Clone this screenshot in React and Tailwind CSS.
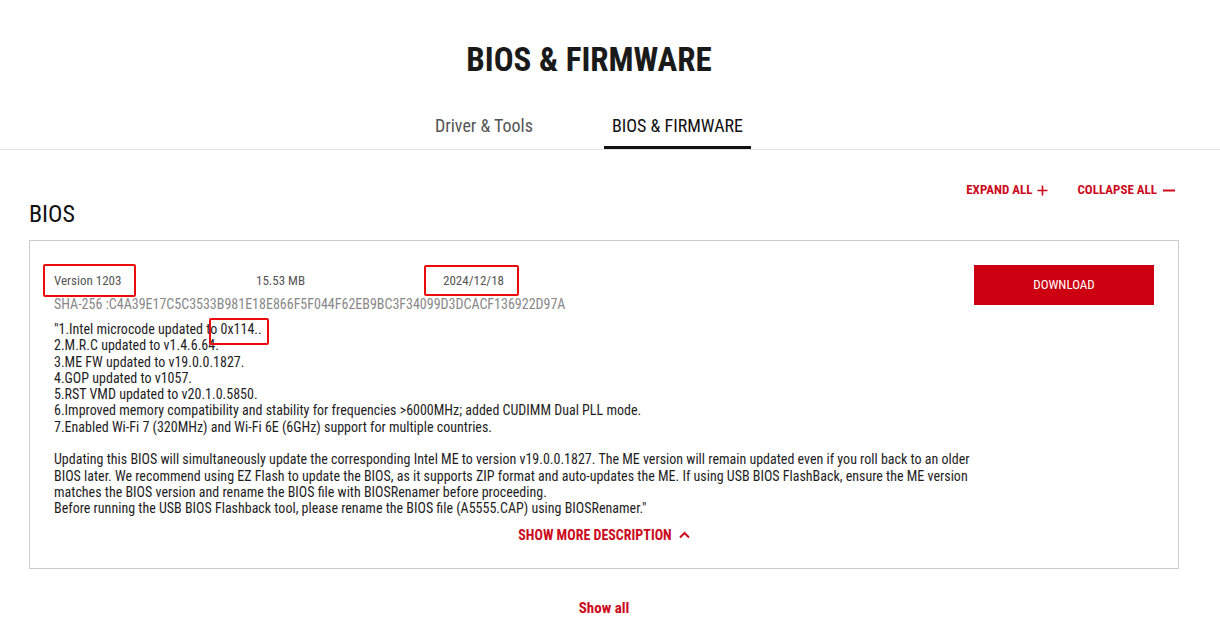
import React from 'react';

const FONT = '"Roboto Condensed", "Liberation Sans Narrow", Roboto, sans-serif';

const lines = [
  '2.M.R.C updated to v1.4.6.64.',
  '3.ME FW updated to v19.0.0.1827.',
  '4.GOP updated to v1057.',
  '5.RST VMD updated to v20.1.0.5850.',
  '6.Improved memory compatibility and stability for frequencies >6000MHz; added CUDIMM Dual PLL mode.',
  '7.Enabled Wi-Fi 7 (320MHz) and Wi-Fi 6E (6GHz) support for multiple countries.',
];

// red annotation boxes drawn over the screenshot
const Mark = ({ className }) => (
  <span className={`pointer-events-none absolute rounded-[2px] border-2 border-[#ec0a0a] ${className}`}></span>
);

export default function App() {
  return (
    <div className="min-h-screen bg-white text-[#111]" style={{ fontFamily: FONT, fontStretch: 'condensed' }}>
      {/* Page title */}
      <h1 className="pt-[38px] pr-[42px] text-center text-[33px] font-bold leading-[44px] text-[#1a1a1a]">
        BIOS &amp; FIRMWARE
      </h1>

      {/* Tabs */}
      <div className="mt-[32px] border-b border-[#e3e3e3]">
        <div className="flex justify-center pr-[42px]">
          <button className="px-2 pb-[11px] text-[18px] leading-[24px] text-[#555]">Driver &amp; Tools</button>
          <button className="ml-[63px] border-b-[3px] border-[#111] px-2 pb-[8px] text-[18px] leading-[24px] text-[#111]">
            BIOS &amp; FIRMWARE
          </button>
        </div>
      </div>

      <div className="ml-[29px] w-[1150px]">
        {/* Expand / collapse */}
        <div className="mt-[32px] flex justify-end gap-[29px] pr-[4px] text-[13px] font-bold leading-[16px] text-[#cc0a1c]">
          <button className="flex items-center gap-[5px]">
            EXPAND ALL
            <svg width="11" height="11" viewBox="0 0 11 11" fill="none" stroke="currentColor" strokeWidth="1.6">
              <path d="M5.5 0.5v10M0.5 5.5h10" />
            </svg>
          </button>
          <button className="flex items-center gap-[6px]">
            COLLAPSE ALL
            <svg width="12" height="11" viewBox="0 0 12 11" fill="none" stroke="currentColor" strokeWidth="2">
              <path d="M0 5.5h12" />
            </svg>
          </button>
        </div>

        <h2 className="mt-[1px] text-[24px] leading-[30px] text-[#111]">BIOS</h2>

        {/* BIOS card */}
        <div className="mt-[11px] border border-[#cccccc] px-[24px] pt-[24px] pb-[25px]">
          <div className="flex items-start">
            <div className="flex-1">
              <div className="mt-[8px] flex text-[13px] leading-[16px] text-[#555]">
                <span className="w-[202px]">
                  <span className="relative">
                    Version 1203
                    <Mark className="-left-[11px] -right-[15px] -top-[9px] -bottom-[9px]" />
                  </span>
                </span>
                <span className="w-[187px]">15.53 MB</span>
                <span className="relative">
                  2024/12/18
                  <Mark className="-left-[19px] -right-[15px] -top-[8px] -bottom-[7px]" />
                </span>
              </div>
              <div className="mt-[7px] text-[14px] leading-[16px] text-[#888]">
                SHA-256 :C4A39E17C5C3533B981E18E866F5F044F62EB9BC3F34099D3DCACF136922D97A
              </div>
              <div className="mt-[9px] text-[14px] leading-[16.3px] text-[#1e1e1e]">
                <div>
                  "1.Intel microcode updated to{' '}
                  <span className="relative">
                    0x114..
                    <Mark className="-left-[12px] -right-[7px] -top-[3px] -bottom-[8px]" />
                  </span>
                </div>
                {lines.map((l) => (
                  <div key={l}>{l}</div>
                ))}
                <div className="h-[16.3px]"></div>
                <p className="w-[920px]">
                  Updating this BIOS will simultaneously update the corresponding Intel ME to version v19.0.0.1827. The ME version will remain updated even if you roll back to an older BIOS later. We recommend using EZ Flash to update the BIOS, as it supports ZIP format and auto-updates the ME. If using USB BIOS FlashBack, ensure the ME version matches the BIOS version and rename the BIOS file with BIOSRenamer before proceeding.
                  <br />
                  Before running the USB BIOS Flashback tool, please rename the BIOS file (A5555.CAP) using BIOSRenamer."
                </p>
              </div>
            </div>
            <button className="h-[40px] w-[180px] shrink-0 bg-[#cc0011] text-[13px] text-white">DOWNLOAD</button>
          </div>

          <div className="mt-[10px] flex justify-center">
            <button className="flex items-center gap-[7px] text-[14px] font-bold leading-[16px] text-[#cc0a1c]">
              SHOW MORE DESCRIPTION
              <svg width="11" height="8" viewBox="0 0 11 8" fill="none" stroke="currentColor" strokeWidth="2">
                <path d="M1 6.5l4.5-4.5 4.5 4.5" />
              </svg>
            </button>
          </div>
        </div>

        <div className="mt-[30px] flex justify-center">
          <button className="text-[15px] font-bold leading-[18px] text-[#cc0a1c]">Show all</button>
        </div>
      </div>
    </div>
  );
}
